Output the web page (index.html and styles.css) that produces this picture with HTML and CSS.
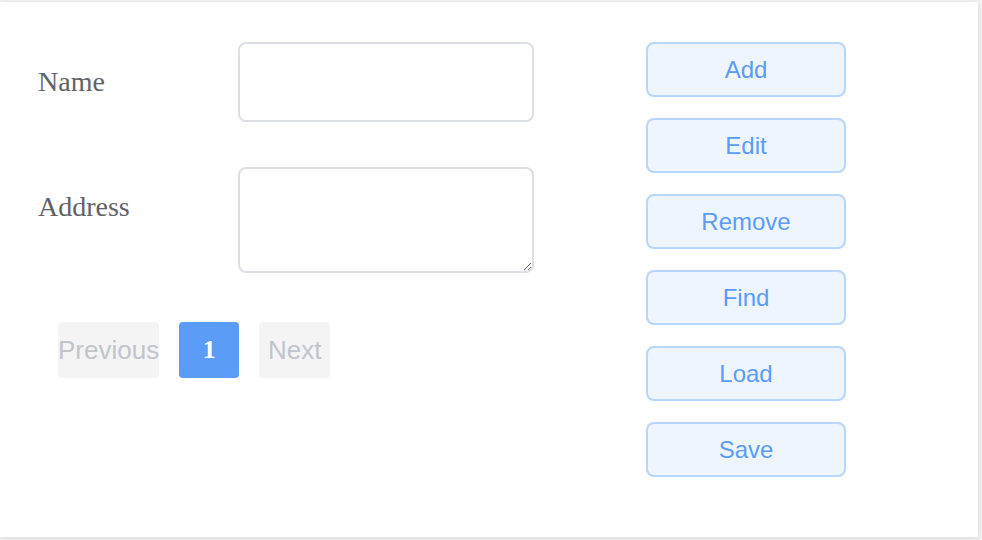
FILE: index.html
```html
<!DOCTYPE html>
<html>
<head>
<meta charset="utf-8">
<link rel="stylesheet" href="styles.css">
</head>
<body>
<div class="card">
  <div class="form">
    <div class="form-item">
      <label class="label">Name</label>
      <input class="input" type="text">
    </div>
    <div class="form-item">
      <label class="label">Address</label>
      <textarea class="textarea"></textarea>
    </div>
    <div class="pagination">
      <button class="pg-btn" disabled>Previous</button>
      <button class="pg-num">1</button>
      <button class="pg-btn" disabled>Next</button>
    </div>
  </div>
  <div class="actions">
    <button class="act">Add</button>
    <button class="act">Edit</button>
    <button class="act">Remove</button>
    <button class="act">Find</button>
    <button class="act">Load</button>
    <button class="act">Save</button>
  </div>
</div>
</body>
</html>
```

FILE: styles.css
```css
html, body {
  margin: 0;
  padding: 0;
  background: #f3f3f3;
  width: 982px;
  height: 540px;
  overflow: hidden;
}
.card {
  box-sizing: border-box;
  margin-top: 2px;
  width: 978px;
  height: 535px;
  background: #ffffff;
  box-shadow: 0 1px 6px rgba(0, 0, 0, 0.12);
  display: flex;
  padding: 40px 0 0 38px;
}
.form {
  width: 608px;
  display: flex;
  flex-direction: column;
}
.form-item {
  display: flex;
  margin-bottom: 45px;
}
.label {
  width: 200px;
  font-family: "Liberation Serif", serif;
  font-size: 28px;
  line-height: 80px;
  color: #606266;
}
.input, .textarea {
  box-sizing: border-box;
  width: 296px;
  border: 2px solid #dcdfe6;
  border-radius: 8px;
  outline: none;
  background: #fff;
  margin: 0;
  padding: 0 20px;
}
.input {
  height: 80px;
}
.textarea {
  height: 106px;
  resize: both;
}
.pagination {
  display: flex;
  gap: 20px;
  padding-left: 20px;
  margin-top: 4px;
}
.pg-btn, .pg-num {
  box-sizing: border-box;
  height: 56px;
  border: none;
  border-radius: 4px;
  margin: 0;
}
.pg-btn {
  min-width: 71px;
  padding: 0;
  background: #f4f4f5;
  color: #c0c4cc;
  font-family: "Liberation Sans", Arial, sans-serif;
  font-size: 26px;
}
.pg-num {
  width: 60px;
  padding: 0;
  background: #5a9cf8;
  color: #ffffff;
  font-family: "Liberation Serif", serif;
  font-weight: bold;
  font-size: 26px;
}
.actions {
  display: flex;
  flex-direction: column;
  gap: 21px;
}
.act {
  box-sizing: border-box;
  width: 200px;
  height: 55px;
  margin: 0;
  padding: 0;
  background: #eef5fe;
  border: 2px solid #b8d6fb;
  border-radius: 8px;
  color: #5a9cf8;
  font-family: "Liberation Sans", Arial, sans-serif;
  font-size: 24px;
}
```
